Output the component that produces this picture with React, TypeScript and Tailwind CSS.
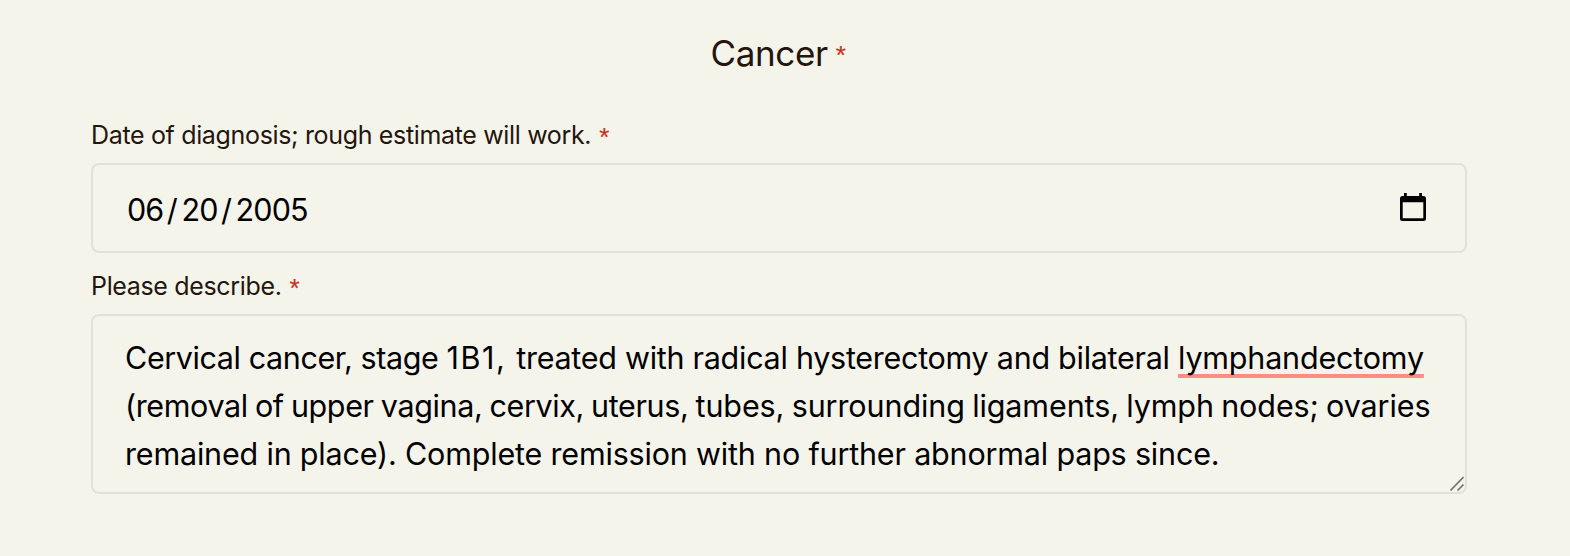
import React from 'react';

interface Segment {
  text: string;
  classNames: string;
}

interface FieldLabelProps {
  text: string;
  classNames?: string;
}

const misspelled = "underline decoration-[#ff8c82] decoration-4 underline-offset-[5px] [text-decoration-skip-ink:none]";

const dateParts = ["06", "20", "2005"];

const lines: Segment[][] = [
  [
    { text: "Cervical cancer, stage ", classNames: "tracking-[-0.4px]" },
    { text: "1B1, ", classNames: "tracking-[1.5px]" },
    { text: "treated with radical hysterectomy and bilateral ", classNames: "tracking-[-0.27px]" },
    { text: "lymphandectomy", classNames: `tracking-[-0.19px] ${misspelled}` },
  ],
  [
    { text: "(removal of upper vagina, cervix, uterus, ", classNames: "tracking-[-0.37px] [word-spacing:-1.1px]" },
    { text: "tubes, surrounding ligaments, lymph nodes; ovaries", classNames: "tracking-[-0.1px] [word-spacing:-1.1px]" },
  ],
  [
    { text: "remained in place). Complete remission with no further abnormal paps since.", classNames: "tracking-[-0.18px]" },
  ],
];

function Required() {
  return (
    <span className="pt-[2px] font-['Liberation_Sans',sans-serif] text-[26px] text-[#c8351f] [-webkit-text-stroke:0.2px_#c8351f]">*</span>
  );
}

function FieldLabel({ text, classNames = "" }: FieldLabelProps) {
  return (
    <div className={`flex h-[38px] gap-[8px] text-[25px] leading-[38px] tracking-[-0.34px] whitespace-nowrap text-[#24150d] ${classNames}`}>
      <span>{text}</span>
      <Required />
    </div>
  );
}

function CalendarIcon() {
  return (
    <svg className="mb-[2px]" width="26" height="28" viewBox="0 0 26 28" fill="none">
      <path d="M4 0h2.800v4H4zM19.200 0h2.800v4h-2.800z" fill="#000" />
      <path d="M2.500 3h21A2.500 2.500 0 0 1 26 5.500V25.500A2.500 2.500 0 0 1 23.500 28h-21A2.500 2.500 0 0 1 0 25.500V5.500A2.500 2.500 0 0 1 2.500 3zM2.700 9.300v16h20.600v-16z" fill="#000" fillRule="evenodd" />
    </svg>
  );
}

export default function App() {
  return (
    <div className="h-[556px] w-[1570px] overflow-hidden bg-[#f5f4eb] font-['Inter',sans-serif]">
      <div className="ml-[91px] flex w-[1376px] flex-col">
        <h1 className="mt-[26px] flex h-[54px] justify-center gap-[8px] pr-[2px] text-[35px] leading-[54px] tracking-[-0.4px] text-[#24150d]">
          <span>Cancer</span>
          <Required />
        </h1>

        <FieldLabel text="Date of diagnosis; rough estimate will work." classNames="mt-[36px]" />
        <div className="mt-[9px] flex h-[90px] items-center justify-between rounded-lg border-2 border-[#e1e1d9] pr-[39px] pl-[34px]">
          <div className="mt-1 flex text-[30.500px] leading-[48px] tracking-[-0.9px] text-black">
            {dateParts.map((part, i) => (
              <React.Fragment key={part}>
                {i > 0 && <span className="mr-[4.500px] ml-[3.500px]">/</span>}
                <span>{part}</span>
              </React.Fragment>
            ))}
          </div>
          <CalendarIcon />
        </div>

        <FieldLabel text="Please describe." classNames="mt-[14px]" />
        <div className="relative mt-[9px] h-[180px] rounded-lg border-2 border-[#e1e1d9] pt-[18px] pl-[32px]">
          {lines.map((segments, i) => (
            <p key={i} className="text-[30.500px] leading-[48px] whitespace-pre text-black">
              {segments.map((segment) => (
                <span key={segment.text} className={segment.classNames}>{segment.text}</span>
              ))}
            </p>
          ))}
          {/* resize grip */}
          <svg className="absolute right-[1px] bottom-[1px]" width="14" height="15" viewBox="0 0 14 15" stroke="#77776f" strokeWidth="1.700">
            <path d="M0.500 14.500L13.500 1M7.500 14.500L13.500 8.500" />
          </svg>
        </div>
      </div>
    </div>
  );
}
